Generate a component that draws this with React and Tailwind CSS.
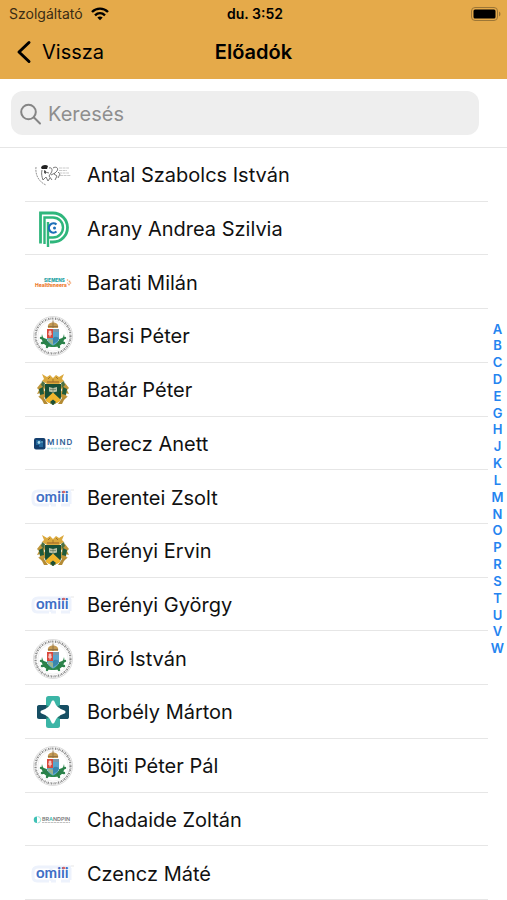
import React, { useState } from "react";

function AcademyLogo() {
  return (
    <svg viewBox="0 0 40 40" className="size-10" aria-hidden="true">
      <path d="M3 12 C2 20 6 27 13 30" fill="none" stroke="#888" strokeWidth="0.9" strokeDasharray="2 0.8" />
      <g fill="none" stroke="#777" strokeWidth="1">
        <path d="M9 15 C8 19 9 22 10 25 L13 22 L15 26 L17 23" />
        <path d="M16 13 C19 12 20 15 18 18 L16 21 L19 25" />
        <path d="M20 13 C23 11 26 13 24 16 L21 19 L24 21 L22 25" />
        <path d="M12 17 L16 18 M18 20 L22 18 M25 17 L27 19 L25 23" />
      </g>
      <path d="M8 13 C8 10 13 9 15 11 L14 14 L9 14 Z" fill="#222" />
      <path d="M11 15 L13 16 L13 19 L11 18 Z" fill="#555" />
      <g stroke="#c4c4c4" strokeWidth="0.9" strokeDasharray="3 0.6">
        <path d="M26 13 H36" />
        <path d="M26 15.500 H34" />
        <path d="M26 18 H36" />
        <path d="M27 20.500 H38" />
      </g>
    </svg>
  );
}

function PortalLogo() {
  return (
    <svg viewBox="0 0 40 40" className="size-10" fill="none" aria-hidden="true">
      <g stroke="#2fb67c" strokeWidth="2.8">
        <path d="M7.500 34.500 V4 H20 A14 14 0 0 1 20 33 H17" />
        <path d="M11.500 35 V8.500 H20 A10 10 0 0 1 20 28.500 H16" strokeWidth="2.400" />
        <path d="M15 38 V13" strokeWidth="2.400" />
      </g>
      <path d="M23.500 15.500 A4.600 4.600 0 1 0 23.500 22.500" stroke="#1d6fb8" strokeWidth="2.2" />
      <circle cx="21.500" cy="19" r="1.500" fill="#1d6fb8" />
    </svg>
  );
}

function SiemensLogo() {
  return (
    <svg viewBox="0 0 40 40" className="size-10" aria-hidden="true">
      <text x="11" y="18.500" fontSize="4.6" fontWeight="800" fill="#27a3a5" fontFamily="Inter, sans-serif">SIEMENS</text>
      <text x="2" y="23.500" fontSize="5" fontWeight="800" fill="#ec7a2d" fontFamily="Inter, sans-serif">Healthineers</text>
      <g fill="#f2a06a">
        <circle cx="34.500" cy="17" r="0.800" />
        <circle cx="36.500" cy="18.500" r="0.900" />
        <circle cx="37.500" cy="20" r="0.800" />
        <circle cx="36" cy="21.500" r="0.900" />
        <circle cx="34.500" cy="20" r="0.600" />
      </g>
    </svg>
  );
}

function SealLogo() {
  return (
    <svg viewBox="0 0 40 40" className="size-10" aria-hidden="true">
      <circle cx="20" cy="20" r="19.500" fill="#fff" stroke="#c4c4c4" strokeWidth="0.6" />
      <circle cx="20" cy="20" r="17.500" fill="none" stroke="#8c8c8c" strokeWidth="2.200" strokeDasharray="1.300 0.7 0.6 0.9" />
      <circle cx="20" cy="20" r="15.200" fill="none" stroke="#ddd" strokeWidth="0.4" />
      <path d="M9 18 C7 25 12 32 20 31 C28 32 33 25 31 18 C30 23 27 27 20 28 C13 27 10 23 9 18 Z" fill="#2c8a4e" />
      <path d="M8 22 L13 24 M9 27 L14 26 M32 22 L27 24 M31 27 L26 26 M14 31 L16 27 M26 31 L24 27" stroke="#2a8049" strokeWidth="2.400" strokeLinecap="round" />
      <path d="M14 13 H26 V22 C26 26 23 28 20 29.500 C17 28 14 26 14 22 Z" fill="#5aa5cb" />
      <path d="M14 13 H20 V22 H14 Z" fill="#d9483b" />
      <path d="M17 14.500 V20.500 M15.500 16 H18.500 M15 18 H19" stroke="#fff" strokeWidth="0.9" />
      <path d="M20 13 H26 V16 H20 Z" fill="#7c98ab" />
      <path d="M20 22 C22 20 24 21 26 22 L25 25 L20 28 Z" fill="#3a86ad" />
      <path d="M15 22 L20 24 V29 L15 25 Z" fill="#9bb58f" />
      <path d="M15 12 C14 8 17 6.500 20 6.500 C23 6.500 26 8 25 12 Z" fill="#c49a54" />
      <path d="M20 4.500 V12 M15 10.500 H25" stroke="#8d7144" strokeWidth="0.9" />
    </svg>
  );
}

function CrestLogo() {
  return (
    <svg viewBox="0 0 40 40" className="size-10" aria-hidden="true">
      <path d="M9 4 L14 7 L17 5 L20 8 L23 5 L26 7 L31 4 L29 9 L31 11 L26 14 H14 L9 11 L11 9 Z" fill="#dba93d" />
      <path d="M4 18 L8 13 L13 16 L11 20 L14 25 L10 29 L6 27 L8 23 L4 24 L6 20 Z" fill="#c0963a" />
      <path d="M36 18 L32 13 L27 16 L29 20 L26 25 L30 29 L34 27 L32 23 L36 24 L34 20 Z" fill="#c0963a" />
      <path d="M6 19 L10 17 L11 24 L7 25 Z M34 19 L30 17 L29 24 L33 25 Z" fill="#1e5a3c" />
      <path d="M5 26 L11 28 L15 34 L11 34 L9 30 Z M35 26 L29 28 L25 34 L29 34 L31 30 Z" fill="#b48b34" />
      <path d="M9 11 L12 13 L11 18 L8 15 Z M31 11 L28 13 L29 18 L32 15 Z" fill="#4c7042" />
      <path d="M12 14 H28 V27 C28 31 23 33 20 35 C17 33 12 31 12 27 Z" fill="#174f38" />
      <path d="M13 29 L20 22.500 L27 29 V31 C25 33 22 33 20 34.500 C18 33 15 33 13 31 Z" fill="#f0b52c" />
      <path d="M17 32 L20 29.500 L23 32 L20 35 Z" fill="#1b4f36" />
      <path d="M16 17 L20 18 L24 17 V21.500 L20 22.500 L16 21.500 Z" fill="#b9c2a8" />
      <path d="M20 18 V22 M17 19.500 H23" stroke="#5d7259" strokeWidth="0.6" />
      <path d="M14 11 H26 V13 H14 Z" fill="#b98431" />
      <path d="M15 9 L17 7 M25 9 L23 7 M20 9 V12" stroke="#9c7229" strokeWidth="0.9" />
    </svg>
  );
}

function MindLogo() {
  return (
    <svg viewBox="0 0 40 40" className="size-10" aria-hidden="true">
      <rect x="1" y="14" width="11.500" height="11.500" rx="2" fill="#143f6e" />
      <path d="M3 16 H8 V19 H10 V23 H6 V21 H3 Z" fill="#23689c" />
      <circle cx="6" cy="18.500" r="1.400" fill="#a8d8ea" />
      <circle cx="9" cy="18" r="0.900" fill="#5fb0d0" />
      <text y="20.500" fontSize="8" fontWeight="600" fill="#2f5f96" fontFamily="Inter, sans-serif">
        <tspan x="14">M</tspan><tspan x="23">I</tspan><tspan x="26.500">N</tspan><tspan x="33.500">D</tspan>
      </text>
      <path d="M14 24.500 H38" stroke="#b5e0e6" strokeWidth="1.500" strokeDasharray="3 0.6" />
    </svg>
  );
}

function OmiiiLogo() {
  return (
    <svg viewBox="0 0 40 40" className="size-10 overflow-visible" aria-hidden="true">
      <g fill="none" stroke="#edf2fc" strokeWidth="3">
        <path d="M16 27 H4 C1 27 0 25 0 22 V18 C0 14 2 13 5 13 H14" />
        <path d="M14 13 H38 M18 27 V14 M37 26 V14 M18 27 H23 M28 27 H37" />
      </g>
      <path d="M38 12 H41" stroke="#ddd" strokeWidth="0.7" />
      <text x="3" y="24" fontSize="15" fontWeight="700" fill="#3f6fc6" fontFamily="Lato, sans-serif">omiii</text>
      <circle cx="30.800" cy="14" r="1.300" fill="#df6258" />
    </svg>
  );
}

function CrossLogo() {
  return (
    <svg viewBox="0 0 40 40" className="size-10" aria-hidden="true">
      <rect x="13" y="4" width="14" height="32" rx="2.500" fill="#3bb5a6" />
      <path d="M6 13 H13 V18 H27 V13 H34 C35.500 13 36 14 36 15 V25 C36 26.500 35 27 34 27 H27 V23 H13 V27 H6 C4.500 27 4 26 4 25 V15 C4 14 4.500 13 6 13 Z" fill="#164e63" />
      <path d="M13 13 V18 L17 15 Z M27 13 V18 L23 15 Z M13 27 V22 L17 25 Z M27 27 V22 L23 25 Z" fill="#23746f" />
      <path d="M20 10 C21.500 15 24 18 31 20 C24 22 21.500 25 20 30 C18.500 25 16 22 9 20 C16 18 18.500 15 20 10 Z" fill="#fff" stroke="#fff" strokeWidth="3" strokeLinejoin="round" />
    </svg>
  );
}

function BrandpinLogo() {
  return (
    <svg viewBox="0 0 40 40" className="size-10" aria-hidden="true">
      <path d="M4 16.500 A3.200 3.200 0 0 0 4 23 Z" fill="#3fc1b5" />
      <path d="M4.500 16.500 A3.200 3.200 0 0 1 4.500 23" fill="none" stroke="#8adbd3" strokeWidth="0.8" />
      <text x="9" y="20.500" fontSize="5.4" fontWeight="600" fill="#777" fontFamily="Inter, sans-serif">
        BR<tspan fill="#3fc1b5">A</tspan>NDPIN
      </text>
      <path d="M9 22.500 H37" stroke="#bbb" strokeWidth="0.9" strokeDasharray="2.500 0.5" />
    </svg>
  );
}

const speakers = [
  { name: "Antal Szabolcs István", Logo: AcademyLogo },
  { name: "Arany Andrea Szilvia", Logo: PortalLogo },
  { name: "Barati Milán", Logo: SiemensLogo },
  { name: "Barsi Péter", Logo: SealLogo },
  { name: "Batár Péter", Logo: CrestLogo },
  { name: "Berecz Anett", Logo: MindLogo },
  { name: "Berentei Zsolt", Logo: OmiiiLogo },
  { name: "Berényi Ervin", Logo: CrestLogo },
  { name: "Berényi György", Logo: OmiiiLogo },
  { name: "Biró István", Logo: SealLogo },
  { name: "Borbély Márton", Logo: CrossLogo },
  { name: "Böjti Péter Pál", Logo: SealLogo },
  { name: "Chadaide Zoltán", Logo: BrandpinLogo },
  { name: "Czencz Máté", Logo: OmiiiLogo },
];

const letters = "ABCDEGHJKLMNOPRSTUVW".split("");

function App() {
  const [query, setQuery] = useState("");

  const visible = speakers.filter((s) =>
    s.name.toLowerCase().includes(query.toLowerCase())
  );

  return (
    <div className="min-h-screen flex flex-col bg-white text-[#111] font-['Inter','Liberation_Sans',sans-serif]">
      <header className="bg-[#e5aa4a] text-black">
        {/* Status bar */}
        <div className="grid grid-cols-3 items-center h-7 pl-[9px] pr-[6px] text-sm">
          <div className="flex items-center gap-2 text-[#3b2c13]">
            <span>Szolgáltató</span>
            <svg viewBox="0 0 18 14" className="w-[18px] h-[14px]" fill="none" stroke="#000" strokeWidth="2.4" aria-hidden="true">
              <path d="M1 5 C5.500 0.500 12.500 0.500 17 5" />
              <path d="M4 8.300 C7 5.500 11 5.500 14 8.300" />
              <path d="M6.300 10.500 C8 9 10 9 11.700 10.500 L9 13.300 Z" fill="#000" stroke="none" />
            </svg>
          </div>
          <span className="text-center font-semibold">du. 3:52</span>
          <svg viewBox="0 0 30 14" className="justify-self-end w-[30px] h-[14px]" aria-hidden="true">
            <rect x="0.500" y="0.500" width="26" height="13" rx="3.500" fill="none" stroke="#9c7636" />
            <rect x="2.500" y="2.500" width="22" height="9" rx="1.500" fill="#000" />
            <path d="M28 4.500 C30 5.500 30 8.500 28 9.500 Z" fill="#9c7636" />
          </svg>
        </div>
        {/* Navigation bar */}
        <nav className="grid grid-cols-3 items-center h-[51px] pb-[3px] px-4 text-xl">
          <button type="button" className="flex items-center gap-[10px] cursor-pointer">
            <svg viewBox="0 0 16 24" className="w-4 h-6" fill="none" stroke="#000" strokeWidth="3" strokeLinecap="round" strokeLinejoin="round" aria-hidden="true">
              <path d="M13 2.500 L3 12 L13 21.500" />
            </svg>
            <span>Vissza</span>
          </button>
          <h1 className="text-center font-semibold">Előadók</h1>
        </nav>
      </header>

      <main className="relative flex-1 flex flex-col">
        <div className="pt-3 pb-3 pl-[11px] pr-7 border-b border-[#e6e6e6]">
          <label className="flex items-center gap-1.5 h-11 pl-[9px] pr-3 pt-px rounded-xl bg-[#eeeeee] text-[#8a8a8a]">
            <svg viewBox="0 0 22 22" className="size-[22px] shrink-0" fill="none" stroke="#858585" strokeWidth="2" strokeLinecap="round" aria-hidden="true">
              <circle cx="8.500" cy="9" r="7.300" />
              <path d="M14 14.500 L20 20.500" />
            </svg>
            <input
              type="search"
              aria-label="Keresés"
              placeholder="Keresés"
              value={query}
              onChange={(e) => setQuery(e.target.value)}
              className="w-full bg-transparent text-xl outline-none placeholder:text-[#8e8e8e]"
            />
          </label>
        </div>

        {/* Speaker list */}
        <ul className="flex-1 grid auto-rows-fr pl-[25px] pr-[19px]">
          {visible.map(({ name, Logo }) => (
            <li key={name} className="flex items-center gap-[14px] pl-2 pt-[2px] border-b border-[#e6e6e6] text-xl">
              <Logo />
              <span>{name}</span>
            </li>
          ))}
        </ul>

        {/* Alphabet index, floats over the list edge */}
        <div className="absolute inset-y-0 right-0 w-[19px] flex items-center pb-[2px]">
          <div className="w-full h-[336px] flex flex-col justify-between text-center text-[13px] leading-4 font-semibold text-[#2484f0]">
            {letters.map((letter) => (
              <a key={letter} href={`#${letter}`}>{letter}</a>
            ))}
          </div>
        </div>
      </main>
    </div>
  );
}

export default App;
